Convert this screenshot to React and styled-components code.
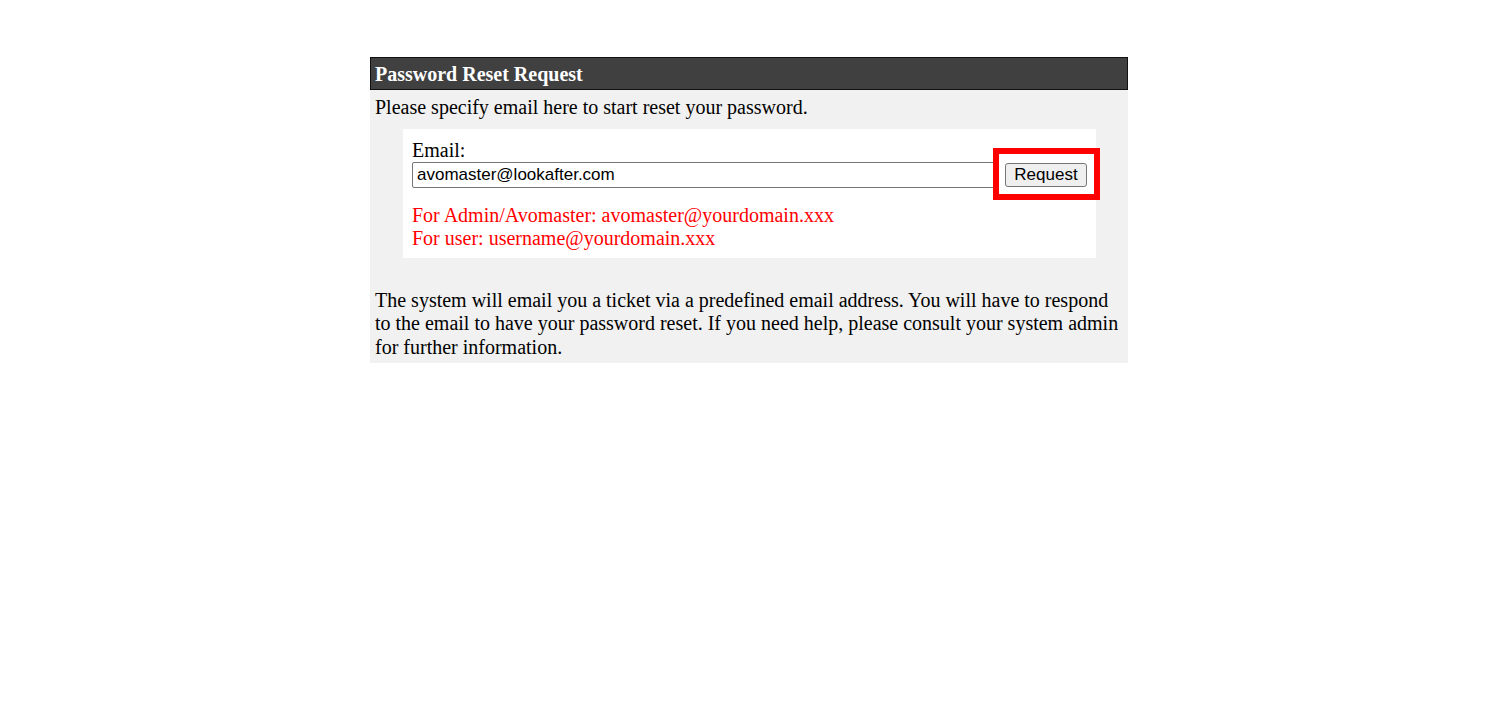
import React from 'react';
import styled, { createGlobalStyle } from 'styled-components';

const Global = createGlobalStyle`
  body {
    margin: 0;
    background: #ffffff;
    font-family: "Liberation Serif", "Times New Roman", serif;
  }
`;

const Panel = styled.div`
  width: 758px;
  margin: 57px 0 0 370px;
  background: #f1f1f1;
  padding-bottom: 4px;
`;

const Header = styled.div`
  height: 31px;
  border: 1px solid #111;
  background: #404040;
  color: #fff;
  font-weight: bold;
  font-size: 20px;
  line-height: 32px;
  padding-left: 4px;
`;

const Text = styled.p`
  margin: 0;
  padding: ${p => p.$top || 0}px 5px 0;
  font-size: 20px;
  line-height: 23.5px;
  color: #000;
`;

const FormBox = styled.div`
  background: #fff;
  margin: 9px 32px 31px 33px;
  padding: 10px 9px 7px;
`;

const Label = styled.div`
  font-size: 20px;
  line-height: 23px;
`;

const Row = styled.div`
  display: flex;
  align-items: center;
  gap: 8px;
`;

const Input = styled.input`
  flex: 1;
  height: 26px;
  box-sizing: border-box;
  border: 1px solid #767676;
  border-radius: 2px;
  padding: 0 4px;
  font-family: "Liberation Sans", Arial, sans-serif;
  font-size: 17px;
  color: #000;
  outline: none;
`;

const ButtonWrap = styled.div`
  position: relative;
`;

const Button = styled.button`
  display: block;
  height: 24px;
  width: 82px;
  padding: 0;
  border: 1px solid #767676;
  border-radius: 3px;
  background: #efefef;
  font-family: "Liberation Sans", Arial, sans-serif;
  font-size: 17px;
  color: #000;
`;

const Highlight = styled.span`
  position: absolute;
  left: -12px;
  right: -13px;
  top: -15px;
  bottom: -13px;
  border: 6px solid #ff0000;
  pointer-events: none;
`;

const Hint = styled.div`
  margin-top: 16px;
  color: #ff0000;
  font-size: 20px;
  line-height: 23.5px;
`;

export default function App() {
  return (
    <>
      <Global />
      <Panel>
        <Header>Password Reset Request</Header>
        <Text $top={6}>Please specify email here to start reset your password.</Text>
        <FormBox>
          <Label>Email:</Label>
          <Row>
            <Input defaultValue="avomaster@lookafter.com" />
            <ButtonWrap>
              <Button>Request</Button>
              <Highlight />
            </ButtonWrap>
          </Row>
          <Hint>
            For Admin/Avomaster: avomaster@yourdomain.xxx
            <br />
            For user: username@yourdomain.xxx
          </Hint>
        </FormBox>
        <Text>
          The system will email you a ticket via a predefined email address. You will have to respond
          to the email to have your password reset. If you need help, please consult your system admin
          for further information.
        </Text>
      </Panel>
    </>
  );
}
